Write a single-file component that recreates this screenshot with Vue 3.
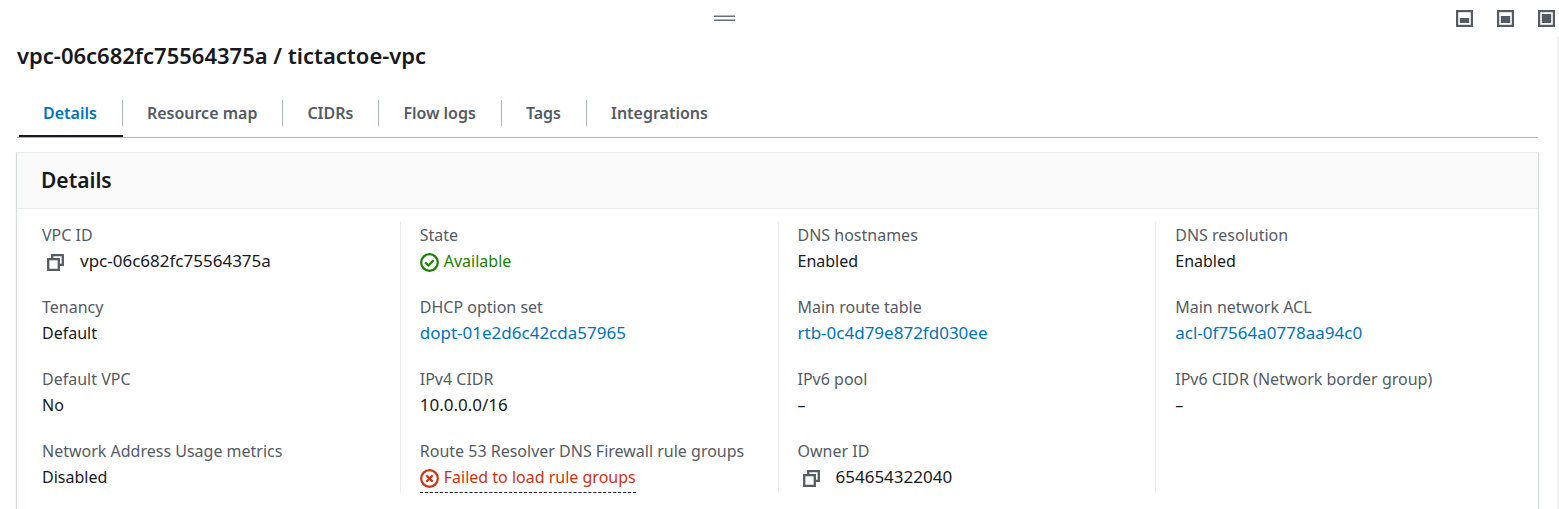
<script setup>
import { ref } from 'vue'

const tabs = ['Details', 'Resource map', 'CIDRs', 'Flow logs', 'Tags', 'Integrations']
const active = ref('Details')

const columns = [
  [
    { label: 'VPC ID', value: 'vpc-06c682fc75564375a', kind: 'copy' },
    { label: 'Tenancy', value: 'Default' },
    { label: 'Default VPC', value: 'No' },
    { label: 'Network Address Usage metrics', value: 'Disabled' },
  ],
  [
    { label: 'State', value: 'Available', kind: 'success' },
    { label: 'DHCP option set', value: 'dopt-01e2d6c42cda57965', kind: 'link' },
    { label: 'IPv4 CIDR', value: '10.0.0.0/16', kind: 'code' },
    { label: 'Route 53 Resolver DNS Firewall rule groups', value: 'Failed to load rule groups', kind: 'error' },
  ],
  [
    { label: 'DNS hostnames', value: 'Enabled' },
    { label: 'Main route table', value: 'rtb-0c4d79e872fd030ee', kind: 'link' },
    { label: 'IPv6 pool', value: '–' },
    { label: 'Owner ID', value: '654654322040', kind: 'copy' },
  ],
  [
    { label: 'DNS resolution', value: 'Enabled' },
    { label: 'Main network ACL', value: 'acl-0f7564a0778aa94c0', kind: 'link' },
    { label: 'IPv6 CIDR (Network border group)', value: '–' },
  ],
]

const sizes = [
  { name: 'Small panel', y: 8, h: 5 },
  { name: 'Medium panel', y: 6, h: 7 },
  { name: 'Full panel', y: 4, h: 9 },
]
</script>

<template>
  <main class="panel">
    <div class="toolbar">
      <button class="grip" type="button" aria-label="Resize panel">
        <svg width="21" height="7" viewBox="0 0 21 7">
          <path d="M0 1.2h21M0 5.2h21" stroke="#687078" stroke-width="1.4" />
        </svg>
      </button>
      <div class="sizes">
        <button v-for="s in sizes" :key="s.name" type="button" :aria-label="s.name">
          <svg width="17" height="17" viewBox="0 0 17 17">
            <rect x="1.1" y="1.1" width="14.8" height="14.8" fill="#fff" stroke="#545b64" stroke-width="2.2" />
            <rect x="3.8" :y="s.y" width="9.4" :height="s.h" fill="#545b64" />
          </svg>
        </button>
      </div>
    </div>

    <div class="scroll">
      <h1>vpc-06c682fc75564375a / tictactoe-vpc</h1>

      <div class="tabs" role="tablist">
        <button
          v-for="t in tabs"
          :key="t"
          type="button"
          role="tab"
          :aria-selected="t === active"
          :class="{ active: t === active }"
          @click="active = t"
        >
          <span>{{ t }}</span>
        </button>
      </div>

      <section class="card">
        <header><h2>Details</h2></header>
        <div class="columns">
          <dl v-for="(col, i) in columns" :key="i">
            <div v-for="f in col" :key="f.label" class="field">
              <dt>{{ f.label }}</dt>
              <dd v-if="f.kind === 'link'" class="code"><a href="#">{{ f.value }}</a></dd>
              <dd v-else-if="f.kind === 'copy'" class="code copy">
                <button type="button" :aria-label="'Copy ' + f.label">
                  <svg width="17" height="17" viewBox="0 0 17 17" fill="none" stroke="#545b64" stroke-width="2.3">
                    <path d="M5.2 5V1.2h10.6v9.6H12" />
                    <path d="M1.2 5.2h10.6v10.6H1.2z" />
                  </svg>
                </button>
                <span>{{ f.value }}</span>
              </dd>
              <dd v-else-if="f.kind === 'success'">
                <span class="status success">
                  <svg width="19" height="19" viewBox="0 0 19 19" fill="none" stroke="#1d8102" stroke-width="2.2">
                    <circle cx="9.5" cy="9.5" r="8.3" />
                    <path d="M5.2 9.4l3.2 3.1 5.1-5.3" />
                  </svg>
                  {{ f.value }}
                </span>
              </dd>
              <dd v-else-if="f.kind === 'error'">
                <button type="button" class="status error">
                  <svg width="19" height="19" viewBox="0 0 19 19" fill="none" stroke="#d13212" stroke-width="2.2">
                    <circle cx="9.5" cy="9.5" r="8.3" />
                    <path d="M6.3 6.3l6.4 6.4M12.7 6.3l-6.4 6.4" />
                  </svg>
                  {{ f.value }}
                </button>
              </dd>
              <dd v-else :class="{ code: f.kind === 'code' }">{{ f.value }}</dd>
            </div>
          </dl>
        </div>
      </section>
    </div>
  </main>
</template>

<style>
body {
  background: #fff;
}
html {
  overflow: hidden;
}
</style>

<style scoped>
.panel {
  font-family: "Noto Sans", "Open Sans", sans-serif;
  font-size: 16px;
  line-height: 26px;
  color: #16191f;
}
button {
  font: inherit;
  color: inherit;
  background: none;
  border: 0;
  margin: 0;
  padding: 0;
  cursor: pointer;
}
svg {
  display: block;
  flex: none;
}
.toolbar {
  display: grid;
  grid-template-columns: 1fr auto 1fr;
  align-items: center;
  height: 37px;
  padding-right: 4px;
}
.grip {
  grid-column: 2;
  margin-right: 106px;
}
.sizes {
  display: flex;
  justify-content: flex-end;
  gap: 24px;
}
.scroll {
  border-right: 2px solid #f1f1f1;
  padding: 0 18px 0 16px;
}
h1 {
  margin: 0 1px;
  padding: 2px 0;
  font-size: 22px;
  line-height: 32px;
  font-weight: 600;
}
.tabs {
  display: flex;
  border-bottom: 1px solid #aab7b8;
  margin: 19px 1px 14px;
  padding-left: 2px;
}
.tabs button {
  padding: 8px 0 9px;
  color: #545b64;
  font-weight: 600;
  border-bottom: 2px solid transparent;
}
.tabs button span {
  display: block;
  padding: 0 25px 0 24px;
  border-right: 1px solid #aab7b8;
}
.tabs button:last-child span {
  border-right: 0;
}
.tabs button.active {
  color: #0073bb;
  border-bottom-color: #16191f;
}
.card {
  border: 1px solid #d5dbdb;
  border-top-color: #eaeded;
  box-shadow: 0 1px 1px rgba(0, 28, 36, 0.15);
}
.card header {
  padding: 11px 24px 12px;
  background: #fafafa;
  border-bottom: 1px solid #eaeded;
}
h2 {
  margin: 0;
  font-size: 21px;
  line-height: 32px;
  font-weight: 600;
}
.columns {
  display: grid;
  grid-template-columns: repeat(4, minmax(0, 1fr));
  padding: 13px 5px 20px;
}
dl {
  display: flex;
  flex-direction: column;
  gap: 20px;
  margin: 0;
  padding-left: 19px;
  border-left: 1px solid #eaeded;
}
dl:first-child {
  border-left-color: transparent;
}
.field {
  min-height: 52px;
}
dt {
  color: #545b64;
  white-space: nowrap;
}
dd {
  display: flex;
  margin: 0;
}
.code {
  font-size: 17px;
}
a {
  color: #0073bb;
  text-decoration: none;
}
.copy {
  align-items: center;
}
.copy button {
  padding: 2px 16px 0 5px;
}
.status {
  display: inline-flex;
  align-items: center;
  gap: 5px;
}
.status svg {
  margin-top: 2px;
}
.success {
  color: #1d8102;
}
.error {
  color: #d13212;
  padding-bottom: 2px;
  border-bottom: 1px dashed #16191f;
}
</style>
